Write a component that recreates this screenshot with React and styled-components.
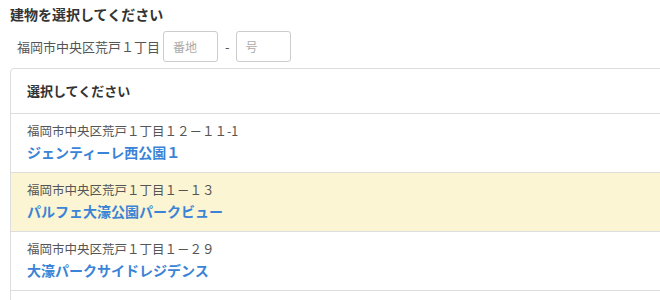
import React from "react";
import styled, { createGlobalStyle } from "styled-components";

const GlobalStyle = createGlobalStyle`
  html, body {
    margin: 0;
    padding: 0;
    background: #fff;
    overflow: hidden;
  }
  body {
    font-family: "Noto Sans CJK JP", "Noto Sans", sans-serif;
    color: #333;
  }
`;

const Page = styled.div`
  width: 680px;
  padding: 4px 0 0 10px;
  box-sizing: border-box;
`;

const Title = styled.h2`
  margin: 0;
  font-size: 14px;
  line-height: 20px;
  font-weight: bold;
  color: #333;
`;

const AddressRow = styled.div`
  display: flex;
  align-items: center;
  gap: 3px;
  margin-top: 7px;
  padding-left: 7px;
  height: 31px;
`;

const AddressLabel = styled.span`
  font-size: 13px;
  color: #555;
`;

const NumberInput = styled.input`
  width: 55px;
  height: 31px;
  box-sizing: border-box;
  border: 1px solid #ccc;
  border-radius: 3px;
  padding: 0 9px;
  font-family: inherit;
  font-size: 12px;
  color: #333;

  &::placeholder {
    color: #aaa;
  }
`;

const Dash = styled.span`
  font-size: 13px;
  color: #555;
  padding: 0 3px 0 4px;
`;

const ListBox = styled.div`
  margin-top: 6px;
  border: 1px solid #ddd;
  border-radius: 4px;
  width: 680px;
  min-height: 260px;
`;

const ListHeader = styled.div`
  padding: 12px 16px;
  line-height: 20px;
  font-size: 13px;
  font-weight: bold;
  color: #333;
  border-bottom: 1px solid #ddd;
`;

const Item = styled.div`
  padding: 7px 16px 9px;
  border-bottom: 1px solid #ddd;
  background: ${(p) => (p.$active ? "#fbf5d3" : "#fff")};
  cursor: pointer;
`;

const ItemAddress = styled.div`
  font-size: 12.5px;
  line-height: 20px;
  color: #555;
`;

const ItemName = styled.div`
  margin-top: 1px;
  font-size: 14px;
  line-height: 21px;
  font-weight: bold;
  color: #3a83d6;
`;

const buildings = [
  { address: "福岡市中央区荒戸１丁目１２－１１-1", name: "ジェンティーレ西公園１" },
  { address: "福岡市中央区荒戸１丁目１－１３", name: "パルフェ大濠公園パークビュー", active: true },
  { address: "福岡市中央区荒戸１丁目１－２９", name: "大濠パークサイドレジデンス" },
];

const App = () => {
  return (
    <>
      <GlobalStyle />
      <Page>
        <Title>建物を選択してください</Title>
        <AddressRow>
          <AddressLabel>福岡市中央区荒戸１丁目</AddressLabel>
          <NumberInput placeholder="番地" />
          <Dash>-</Dash>
          <NumberInput placeholder="号" />
        </AddressRow>
        <ListBox>
          <ListHeader>選択してください</ListHeader>
          {buildings.map((b, i) => (
            <Item key={i} $active={b.active}>
              <ItemAddress>{b.address}</ItemAddress>
              <ItemName>{b.name}</ItemName>
            </Item>
          ))}
        </ListBox>
      </Page>
    </>
  );
};

export default App;
